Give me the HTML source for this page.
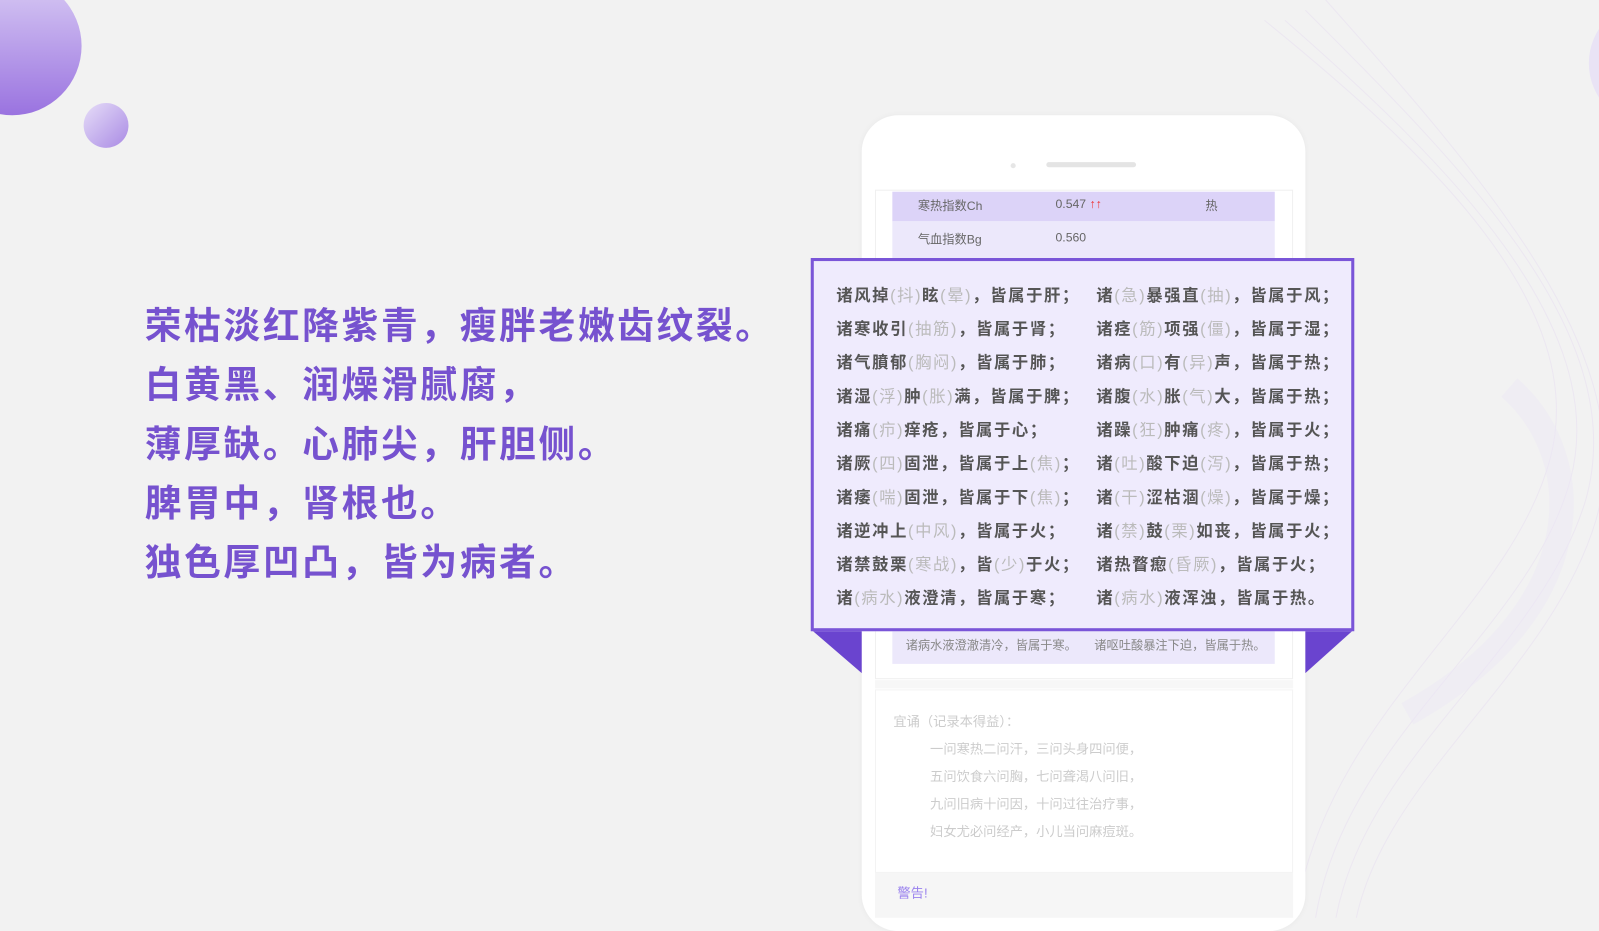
<!DOCTYPE html>
<html><head><meta charset="utf-8"><style>
*{margin:0;padding:0;box-sizing:border-box}
body{width:1599px;height:900px;overflow:hidden;background:#f2f2f2;position:relative;font-family:"Liberation Sans","Noto Sans CJK SC",sans-serif}
#w{position:absolute;left:0;top:0;width:1568px;height:883px;transform:scale(1.0198);transform-origin:0 0}
.abs{position:absolute}
.poem{left:142px;top:291px;color:#7652cf;font-size:36px;line-height:58px;font-weight:bold;letter-spacing:2.6px;white-space:nowrap}
.phone{left:845px;top:113px;width:435px;height:800px;background:#fff;border-radius:36px;box-shadow:0 0 6px rgba(0,0,0,.04)}
.box{left:795px;top:253px;width:533px;height:366px;border:3px solid #7a55d8;background:#efebfd}
.row{position:absolute;font-size:16px;letter-spacing:1.6px;color:#555;white-space:nowrap;font-weight:bold}
.row i{font-style:normal;color:#bbb;font-weight:normal}
.sm{font-size:12px;color:#666;position:absolute;white-space:nowrap}
.lt{font-size:13px;color:#ccc;position:absolute;white-space:nowrap}
</style></head><body><div id="w">
<svg class="abs" style="left:0;top:0" width="1568" height="900">
<defs>
<linearGradient id="g1" x1="0" y1="0" x2="0" y2="1"><stop offset="0" stop-color="#d9ccf4"/><stop offset="1" stop-color="#9a73e0"/></linearGradient>
<linearGradient id="g2" x1="0" y1="0" x2="1" y2="1"><stop offset="0" stop-color="#e6ddf8"/><stop offset="1" stop-color="#a98ae4"/></linearGradient>
</defs>
<circle cx="12" cy="45" r="68" fill="url(#g1)"/>
<circle cx="104" cy="123" r="22" fill="url(#g2)"/>
<circle cx="1620" cy="62" r="62" fill="#e9e3f5"/>
<g fill="none" stroke="#e8e0f0" stroke-width="1" opacity=".6">
<path d="M1240 20 C1400 150 1560 300 1520 450 C1480 600 1300 700 1270 900"/>
<path d="M1260 20 C1420 160 1580 320 1540 470 C1500 620 1320 720 1290 900"/>
<path d="M1280 10 C1440 170 1600 330 1555 490 C1510 640 1340 740 1310 900"/>
<path d="M1300 0 C1460 180 1610 350 1565 510 C1520 660 1360 760 1330 900"/>
</g>
<path d="M1480 380 C1560 450 1560 600 1380 700" fill="none" stroke="#ece5f5" stroke-width="24" opacity=".35"/>
</svg>
<div class="abs poem">荣枯淡红降紫青，瘦胖老嫩齿纹裂。<br>白黄黑、润燥滑腻腐，<br>薄厚缺。心肺尖，肝胆侧。<br>脾胃中，肾根也。<br>独色厚凹凸，皆为病者。</div>
<div class="abs phone"></div>
<div class="abs" style="left:991px;top:160px;width:5px;height:5px;border-radius:50%;background:#e6e6e6"></div>
<div class="abs" style="left:1026px;top:159px;width:88px;height:5px;border-radius:3px;background:#e4e4e4"></div>
<div class="abs" style="left:858px;top:186px;width:410px;height:480px;border:1px solid #f0f0f0"></div>
<div class="abs" style="left:875px;top:188px;width:375px;height:29px;background:#dcd3f8"></div>
<div class="abs" style="left:875px;top:217px;width:375px;height:36px;background:#ece8fb"></div>
<div class="sm" style="left:900px;top:193px">寒热指数Ch</div><div class="sm" style="left:1035px;top:193px">0.547 <span style="color:#e33">↑↑</span></div><div class="sm" style="left:1182px;top:193px">热</div>
<div class="sm" style="left:900px;top:226px">气血指数Bg</div><div class="sm" style="left:1035px;top:226px">0.560</div>
<div class="abs" style="left:875px;top:619px;width:375px;height:32px;background:#ece8fb"></div>
<div class="sm" style="left:888px;top:624px;color:#888">诸病水液澄澈清冷，皆属于寒。</div><div class="sm" style="left:1073px;top:624px;color:#888">诸呕吐酸暴注下迫，皆属于热。</div>
<svg class="abs" style="left:795px;top:617px" width="533" height="45">
<polygon points="0,0 50,0 50,43" fill="#6a44cf"/>
<polygon points="533,0 485,0 485,43" fill="#6a44cf"/>
</svg>
<div class="abs box"></div>
<div class="row" style="left:820px;top:276px">诸风掉<i>(抖)</i>眩<i>(晕)</i>，皆属于肝；</div>
<div class="row" style="left:1075px;top:276px">诸<i>(急)</i>暴强直<i>(抽)</i>，皆属于风；</div>
<div class="row" style="left:820px;top:309px">诸寒收引<i>(抽筋)</i>，皆属于肾；</div>
<div class="row" style="left:1075px;top:309px">诸痉<i>(筋)</i>项强<i>(僵)</i>，皆属于湿；</div>
<div class="row" style="left:820px;top:342px">诸气膹郁<i>(胸闷)</i>，皆属于肺；</div>
<div class="row" style="left:1075px;top:342px">诸病<i>(口)</i>有<i>(异)</i>声，皆属于热；</div>
<div class="row" style="left:820px;top:375px">诸湿<i>(浮)</i>肿<i>(胀)</i>满，皆属于脾；</div>
<div class="row" style="left:1075px;top:375px">诸腹<i>(水)</i>胀<i>(气)</i>大，皆属于热；</div>
<div class="row" style="left:820px;top:408px">诸痛<i>(疖)</i>痒疮，皆属于心；</div>
<div class="row" style="left:1075px;top:408px">诸躁<i>(狂)</i>肿痛<i>(疼)</i>，皆属于火；</div>
<div class="row" style="left:820px;top:441px">诸厥<i>(四)</i>固泄，皆属于上<i>(焦)</i>；</div>
<div class="row" style="left:1075px;top:441px">诸<i>(吐)</i>酸下迫<i>(泻)</i>，皆属于热；</div>
<div class="row" style="left:820px;top:474px">诸痿<i>(喘)</i>固泄，皆属于下<i>(焦)</i>；</div>
<div class="row" style="left:1075px;top:474px">诸<i>(干)</i>涩枯涸<i>(燥)</i>，皆属于燥；</div>
<div class="row" style="left:820px;top:507px">诸逆冲上<i>(中风)</i>，皆属于火；</div>
<div class="row" style="left:1075px;top:507px">诸<i>(禁)</i>鼓<i>(栗)</i>如丧，皆属于火；</div>
<div class="row" style="left:820px;top:540px">诸禁鼓栗<i>(寒战)</i>，皆<i>(少)</i>于火；</div>
<div class="row" style="left:1075px;top:540px">诸热瞀瘛<i>(昏厥)</i>，皆属于火；</div>
<div class="row" style="left:820px;top:573px">诸<i>(病水)</i>液澄清，皆属于寒；</div>
<div class="row" style="left:1075px;top:573px">诸<i>(病水)</i>液浑浊，皆属于热。</div>
<div class="abs" style="left:858px;top:667px;width:410px;height:8px;background:#f7f7f7"></div>
<div class="abs" style="left:858px;top:676px;width:410px;height:180px;background:#fff;border:1px solid #f3f3f3"></div>
<div class="lt" style="left:876px;top:697px">宜诵（记录本得益）：</div>
<div class="lt" style="left:912px;top:724px">一问寒热二问汗，三问头身四问便，</div>
<div class="lt" style="left:912px;top:751px">五问饮食六问胸，七问聋渴八问旧，</div>
<div class="lt" style="left:912px;top:778px">九问旧病十问因，十问过往治疗事，</div>
<div class="lt" style="left:912px;top:805px">妇女尤必问经产，小儿当问麻痘斑。</div>
<div class="abs" style="left:858px;top:856px;width:410px;height:44px;background:#f6f6f6"></div>
<div class="abs" style="left:880px;top:865px;font-size:13px;color:#9a82ee">警告!</div>
</div></body></html>
